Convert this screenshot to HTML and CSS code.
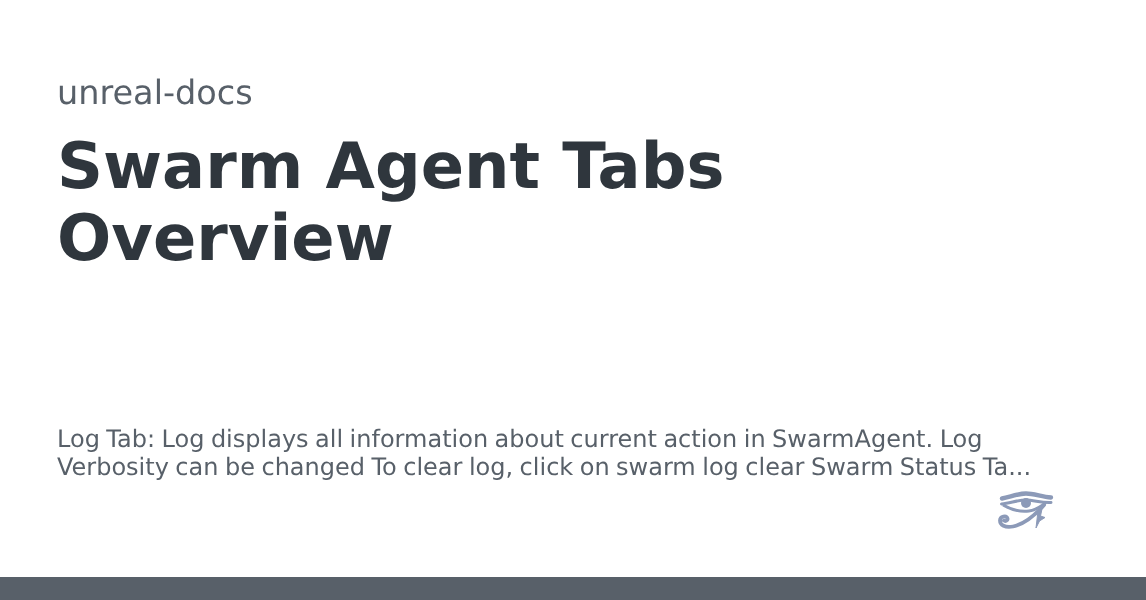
FILE: index.html
```html
<!DOCTYPE html>
<html lang="en">
<head>
<meta charset="utf-8">
<title>Swarm Agent Tabs Overview</title>
<link rel="stylesheet" href="styles.css">
</head>
<body>
<main class="card">
  <div class="top">
    <div class="repo">unreal-docs</div>
    <h1 class="title">Swarm Agent Tabs Overview</h1>
  </div>
  <div class="bottom">
    <p class="desc">Log Tab: Log displays all information about current action in SwarmAgent. Log Verbosity can be changed To clear log, click on swarm log clear Swarm Status Ta...</p>
    <div class="logo-row">
      <svg class="logo" viewBox="0 0 56 40" width="56" height="40" fill="none" stroke="#8c9ab8" stroke-linecap="round" stroke-linejoin="round">
        <path d="M4 8.5 C12 7 20 3.5 28 3.5 C36 3.5 44 7 53 7.5" stroke-width="4.4"/>
        <path d="M3.5 14 C12 13.5 19 10 28 10 C36 10 43 13 53 12.5" stroke-width="3"/>
        <path d="M6 15.5 C14 20 23 22 31 21 C37 20.5 41 17.5 47 13.5" stroke-width="3"/>
        <circle cx="28" cy="13" r="5" fill="#8c9ab8" stroke="none"/>
        <path d="M46 15 C38 24 28 34 15 36.5 C7 38 2 35 2 30.5 C2 26 8.5 25 9.5 28.5 C10 31 7 31.5 6 30.5" stroke-width="3.8"/>
        <path d="M40 21 L38 38 L41.5 31 L47 27.5 L42.5 26 L44 19 Z" fill="#8c9ab8" stroke-width="1"/>
      </svg>
    </div>
  </div>
</main>
<div class="bar"></div>
</body>
</html>
```
FILE: styles.css
```css
* { box-sizing: border-box; }
html, body { margin: 0; padding: 0; }
body {
  width: 1146px;
  height: 600px;
  overflow: hidden;
  background: #fff;
  display: flex;
  flex-direction: column;
  font-family: "DejaVu Sans", sans-serif;
  text-rendering: geometricPrecision;
}
.card {
  flex: 1;
  display: flex;
  flex-direction: column;
  justify-content: space-between;
  padding: 71px 92px 47px 57px;
  will-change: transform;
}
.repo {
  font-size: 33.5px;
  line-height: 44px;
  color: #586069;
}
.title {
  margin: 16px 0 0;
  font-size: 63.9px;
  line-height: 72px;
  font-weight: 700;
  color: #2f363d;
  max-width: 800px;
}
.desc {
  margin: 0;
  font-size: 24px;
  line-height: 28px;
  word-spacing: -1.15px;
  color: #586069;
}
.logo-row {
  display: flex;
  justify-content: flex-end;
  margin-top: 9px;
}
.bar {
  height: 23px;
  background: #586069;
}
```
